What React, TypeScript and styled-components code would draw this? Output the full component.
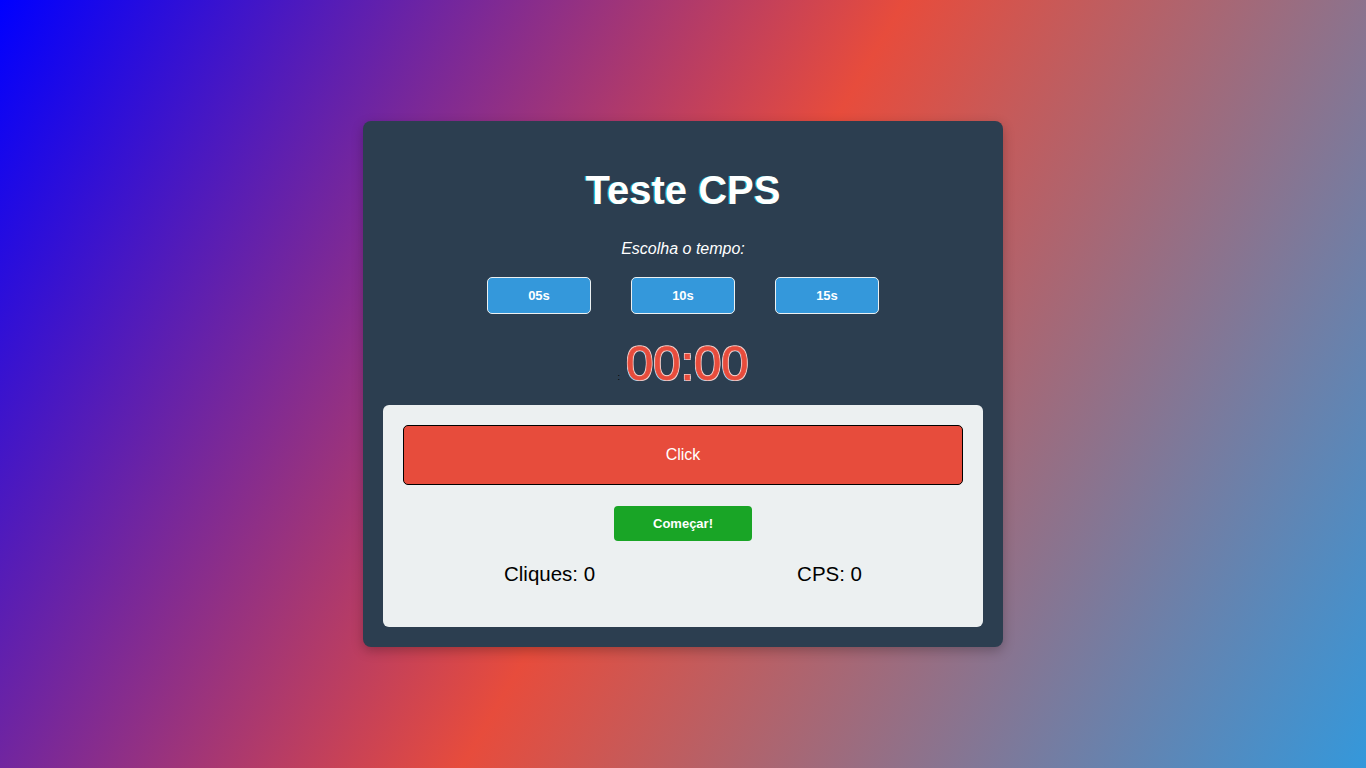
import React from "react";
import styled, { createGlobalStyle } from "styled-components";

const Global = createGlobalStyle`
  html, body { margin: 0; padding: 0; }
  body {
    min-height: 100vh;
    font-family: "Liberation Sans", Arial, sans-serif;
    background: linear-gradient(120deg, #0000ff 0%, #e74c3c 50%, #3498db 100%);
    background-attachment: fixed;
  }
`;

const Page = styled.div`
  height: 768px;
  display: flex;
  align-items: flex-start;
  justify-content: center;
  padding-top: 121px;
  box-sizing: border-box;
`;

const Card = styled.div`
  width: 640px;
  box-sizing: border-box;
  background: #2c3e50;
  border-radius: 8px;
  padding: 20px;
  box-shadow: 0 4px 12px rgba(0, 0, 0, 0.25);
  display: flex;
  flex-direction: column;
  align-items: center;
`;

const Title = styled.h1`
  margin: 24px 0 0;
  color: #fff;
  font-size: 40px;
  line-height: 50px;
  font-weight: bold;
  text-shadow: -1px 0 0 rgba(0, 255, 255, 0.6);
`;

const Label = styled.p`
  margin: 25px 0 0;
  color: #fff;
  font-style: italic;
  font-size: 16px;
  line-height: 18px;
`;

const TimeRow = styled.div`
  display: flex;
  gap: 40px;
  margin-top: 19px;
`;

const TimeButton = styled.button`
  width: 104px;
  height: 37px;
  background: #3498db;
  color: #fff;
  border: 1px solid #ecf0f1;
  border-radius: 5px;
  font-family: "Liberation Sans", Arial, sans-serif;
  font-size: 13px;
  font-weight: bold;
  cursor: pointer;
`;

const TimerRow = styled.div`
  display: flex;
  align-items: baseline;
  margin-top: 21px;
  height: 56px;
`;

const Dot = styled.span`
  color: #000;
  font-size: 9px;
  margin-right: 6px;
`;

const Timer = styled.div`
  color: #e74c3c;
  font-size: 49px;
  line-height: 56px;
  font-weight: normal;
  -webkit-text-stroke: 0.6px #e74c3c;
  text-shadow: 1px 1px 0 #f5d0cc, -1px -1px 0 #f5d0cc, 1px -1px 0 #f5d0cc, -1px 1px 0 #9fd3f0;
`;

const Panel = styled.div`
  align-self: stretch;
  margin-top: 14px;
  background: #ecf0f1;
  border-radius: 6px;
  padding: 20px 20px 41px;
  display: flex;
  flex-direction: column;
  align-items: center;
`;

const ClickButton = styled.button`
  align-self: stretch;
  height: 60px;
  background: #e74c3c;
  color: #fff;
  border: 1px solid #000;
  border-radius: 5px;
  font-family: "Liberation Sans", Arial, sans-serif;
  font-size: 16px;
  cursor: pointer;
`;

const StartButton = styled.button`
  margin-top: 21px;
  width: 138px;
  height: 35px;
  background: #19a526;
  color: #fff;
  border: none;
  border-radius: 4px;
  font-family: "Liberation Sans", Arial, sans-serif;
  font-size: 13px;
  font-weight: bold;
  cursor: pointer;
`;

const Stats = styled.div`
  align-self: stretch;
  display: flex;
  justify-content: space-around;
  margin-top: 21px;
`;

const Stat = styled.span`
  color: #000;
  font-size: 20.5px;
  line-height: 24px;
`;

export default function App() {
  return (
    <>
      <Global />
      <Page>
        <Card>
          <Title>Teste CPS</Title>
          <Label>Escolha o tempo:</Label>
          <TimeRow>
            <TimeButton>05s</TimeButton>
            <TimeButton>10s</TimeButton>
            <TimeButton>15s</TimeButton>
          </TimeRow>
          <TimerRow>
            <Dot>:</Dot>
            <Timer>00:00</Timer>
          </TimerRow>
          <Panel>
            <ClickButton>Click</ClickButton>
            <StartButton>Começar!</StartButton>
            <Stats>
              <Stat>Cliques: 0</Stat>
              <Stat>CPS: 0</Stat>
            </Stats>
          </Panel>
        </Card>
      </Page>
    </>
  );
}
